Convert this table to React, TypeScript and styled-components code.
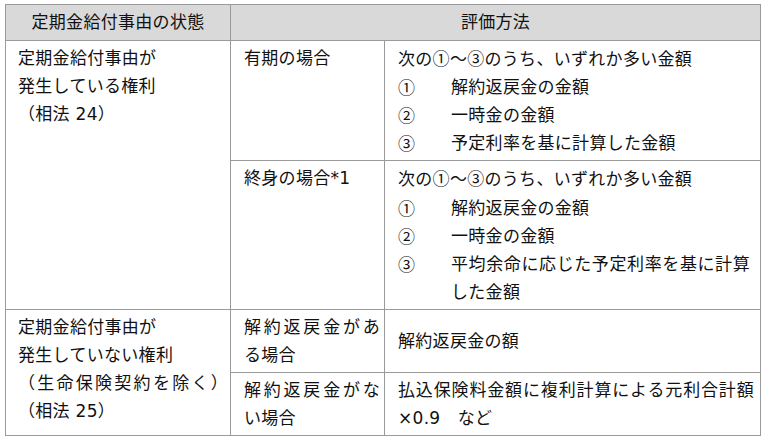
import styled, { createGlobalStyle } from "styled-components";

const GlobalStyle = createGlobalStyle`
  body {
    margin: 0;
    background: #ffffff;
    color: #111111;
    font-family: "DejaVu Sans", "Noto Sans CJK JP", sans-serif;
  }
`;

const Page = styled.div`
  padding: 4px 0 0 5px;
`;

const Table = styled.table`
  border-collapse: collapse;
  table-layout: fixed;
  width: 755px;
  font-size: 17px;
  line-height: 28.1px;
  letter-spacing: 0.3px;
`;

const HeadCell = styled.th`
  background: #d9d9d9;
  border: 1px solid #9a9a9a;
  font-weight: normal;
  text-align: center;
  vertical-align: middle;
  padding: 3px 4px 4px;
`;

const Cell = styled.td<{ $middle?: boolean; $padLeft?: number }>`
  border: 1px solid #9a9a9a;
  vertical-align: ${(p) => (p.$middle ? "middle" : "top")};
  padding: 3px 2px 3px ${(p) => p.$padLeft ?? 13}px;
`;

const Line = styled.div<{ $fill?: number }>`
  white-space: nowrap;
  ${(p) =>
    p.$fill !== undefined
      ? `
    white-space: normal;
    text-align: justify;
    text-align-last: justify;
    text-justify: inter-character;
    margin-right: ${p.$fill}px;
  `
      : ""}
`;

// circled digits and the wave dash come from the CJK face, as in the original
const Glyph = styled.span`
  font-family: "Noto Sans CJK JP", sans-serif;
`;

const Item = styled.div`
  display: flex;
`;

const Marker = styled.span`
  flex: 0 0 53px;
  font-family: "Noto Sans CJK JP", sans-serif;
`;

const ItemText = styled.div`
  flex: 1;
`;

const Choice = ({ n, children }: { n: string; children: React.ReactNode }) => (
  <Item>
    <Marker>{n}</Marker>
    <ItemText>{children}</ItemText>
  </Item>
);

const Lead = () => (
  <Line>
    次の<Glyph>①～③</Glyph>のうち、いずれか多い金額
  </Line>
);

export default function App() {
  return (
    <>
      <GlobalStyle />
      <Page>
        <Table>
          <colgroup>
            <col style={{ width: 225 }} />
            <col style={{ width: 154 }} />
            <col style={{ width: 376 }} />
          </colgroup>
          <thead>
            <tr>
              <HeadCell>定期金給付事由の状態</HeadCell>
              <HeadCell colSpan={2}>評価方法</HeadCell>
            </tr>
          </thead>
          <tbody>
            <tr>
              <Cell rowSpan={2} $padLeft={12}>
                <Line>定期金給付事由が</Line>
                <Line>発生している権利</Line>
                <Line>（相法 24）</Line>
              </Cell>
              <Cell>
                <Line>有期の場合</Line>
              </Cell>
              <Cell>
                <Lead />
                <Choice n="①">解約返戻金の金額</Choice>
                <Choice n="②">一時金の金額</Choice>
                <Choice n="③">予定利率を基に計算した金額</Choice>
              </Cell>
            </tr>
            <tr>
              <Cell>
                <Line>終身の場合*1</Line>
              </Cell>
              <Cell>
                <Lead />
                <Choice n="①">解約返戻金の金額</Choice>
                <Choice n="②">一時金の金額</Choice>
                <Choice n="③">
                  <Line $fill={8}>平均余命に応じた予定利率を基に計算</Line>
                  <Line>した金額</Line>
                </Choice>
              </Cell>
            </tr>
            <tr>
              <Cell rowSpan={2} $padLeft={12}>
                <Line>定期金給付事由が</Line>
                <Line>発生していない権利</Line>
                <Line $fill={0}>（生命保険契約を除く）</Line>
                <Line>（相法 25）</Line>
              </Cell>
              <Cell>
                <Line $fill={2}>解約返戻金があ</Line>
                <Line>る場合</Line>
              </Cell>
              <Cell $middle>
                <Line>解約返戻金の額</Line>
              </Cell>
            </tr>
            <tr>
              <Cell>
                <Line $fill={2}>解約返戻金がな</Line>
                <Line>い場合</Line>
              </Cell>
              <Cell>
                <Line $fill={4}>払込保険料金額に複利計算による元利合計額</Line>
                <Line>×0.9　など</Line>
              </Cell>
            </tr>
          </tbody>
        </Table>
      </Page>
    </>
  );
}
